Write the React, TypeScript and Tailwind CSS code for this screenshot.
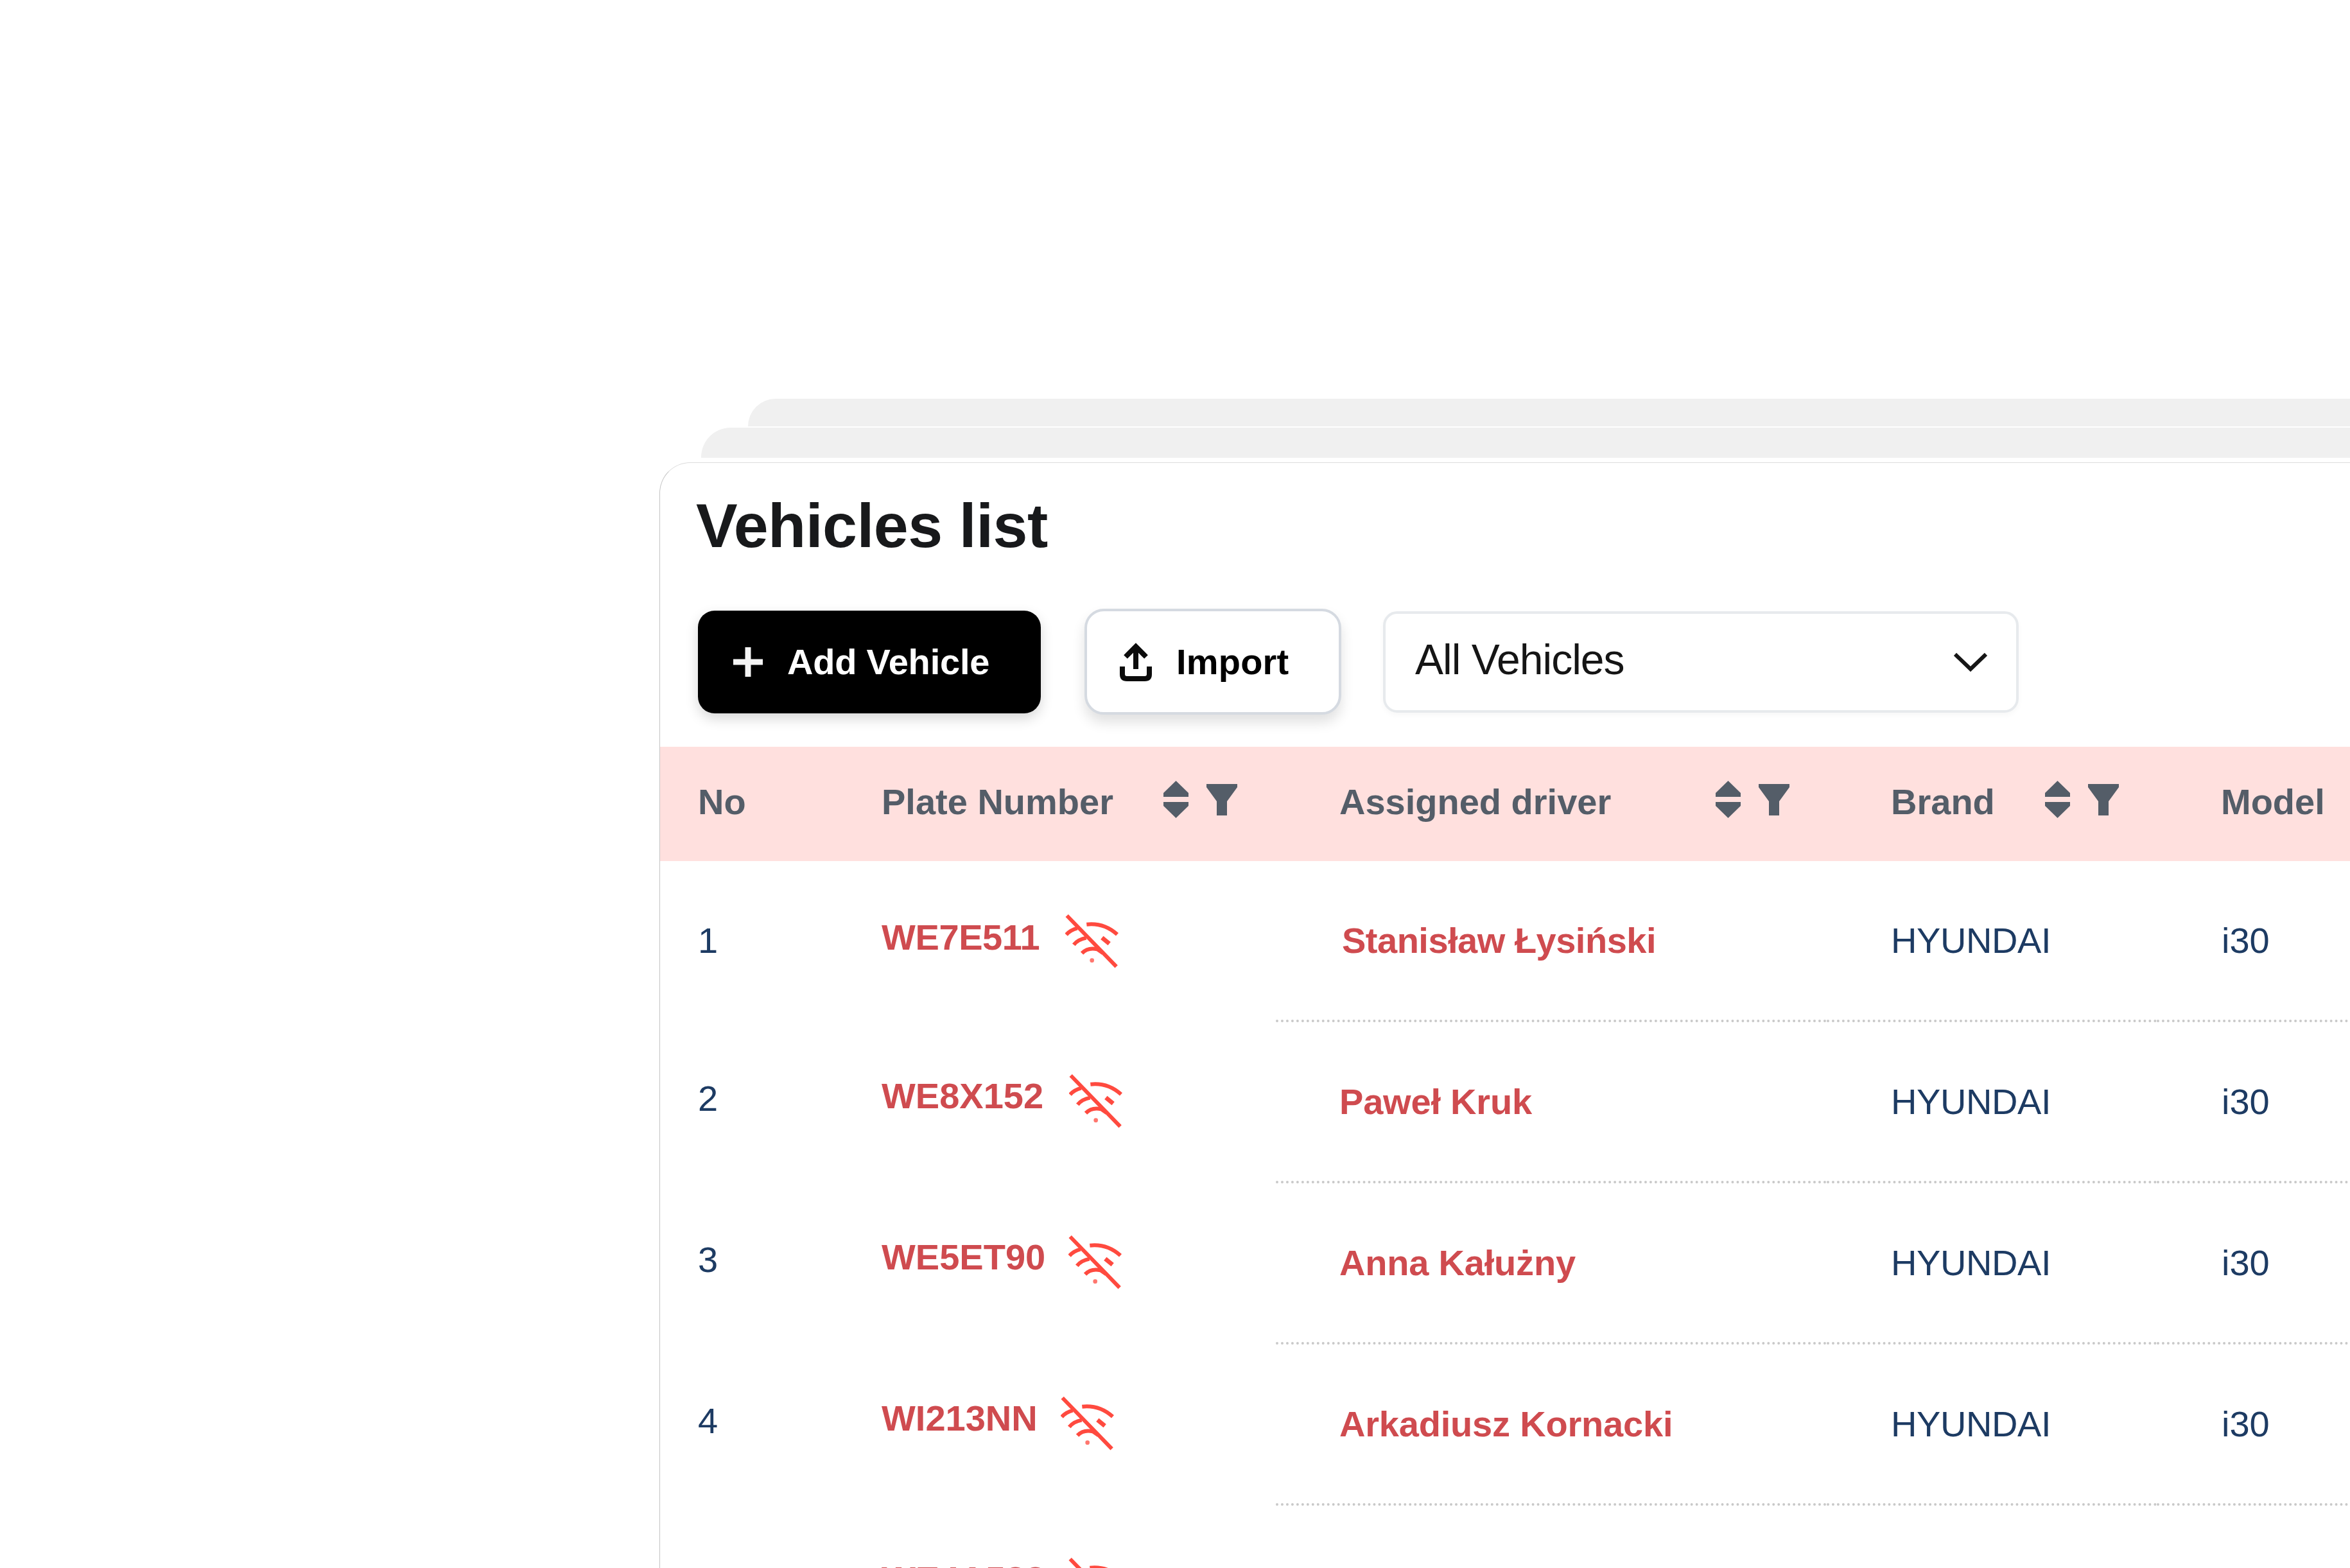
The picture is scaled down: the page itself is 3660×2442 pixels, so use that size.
import clsx from "clsx";

type Vehicle = {
  no: number;
  plate: string;
  driver: string;
  brand: string;
  model: string;
};

const vehicles: Vehicle[] = [
  { no: 1, plate: "WE7E511", driver: "Stanisław Łysiński", brand: "HYUNDAI", model: "i30" },
  { no: 2, plate: "WE8X152", driver: "Paweł Kruk", brand: "HYUNDAI", model: "i30" },
  { no: 3, plate: "WE5ET90", driver: "Anna Kałużny", brand: "HYUNDAI", model: "i30" },
  { no: 4, plate: "WI213NN", driver: "Arkadiusz Kornacki", brand: "HYUNDAI", model: "i30" },
  { no: 5, plate: "WE4A588", driver: "", brand: "", model: "" },
];

const WifiOff = () => (
  <svg viewBox="0 0 252 255" fill="none" stroke="#ff4a3f" strokeWidth="18" className="w-[84px] h-[85px] shrink-0">
    <path d="M8 9 L239 247" />
    <path d="M100 50 C155 44 200 58 243 97" />
    <path d="M5 98 Q25 76 56 68" />
    <path d="M40 145 Q60 120 98 113" />
    <path d="M78 185 Q105 156 150 166 L176 184" />
    <path d="M172 112 L206 140" strokeWidth="20" />
    <circle cx="125" cy="218" r="10" fill="#ff4a3f" stroke="none" opacity="0.75" />
  </svg>
);

const SortIcon = () => (
  <svg viewBox="0 0 39 58" fill="#545d68" className="w-[39px] h-[58px]">
    <path d="M19.5 0 L39 19 V25 H0 V19 Z" />
    <path d="M19.5 58 L39 39 V33 H0 V39 Z" />
  </svg>
);

const FilterIcon = () => (
  <svg viewBox="0 0 48 49" fill="#545d68" className="w-[48px] h-[49px]">
    <path d="M0 0 H48 V5 L32 27 V49 H16 V27 L0 5 Z" />
  </svg>
);

const PlusIcon = () => (
  <svg viewBox="0 0 46 46" stroke="#f4f4f4" strokeWidth="9" className="w-[46px] h-[46px]">
    <path d="M23 0 V46 M0 23 H46" />
  </svg>
);

const UploadIcon = () => (
  <svg viewBox="0 0 50 60" fill="none" stroke="#0c0c0c" strokeWidth="8" className="w-[50px] h-[60px]">
    <path d="M25 41 V6" />
    <path d="M9 22 L25 6 L41 22" />
    <path d="M4 37 V49 Q4 56 11 56 H39 Q46 56 46 49 V37" />
  </svg>
);

const ChevronIcon = () => (
  <svg viewBox="0 0 52 32" fill="none" stroke="#161616" strokeWidth="6" className="w-[52px] h-[32px]">
    <path d="M2 4 L26 27 L50 4" />
  </svg>
);

const ColumnTools = () => (
  <div className="flex items-center gap-[28px] pb-2">
    <SortIcon />
    <FilterIcon />
  </div>
);

const Toolbar = () => (
  <div className="flex items-center h-[165px] mt-[81px] pl-[59px]">
    <button className="flex items-center w-[534px] h-[160px] pl-[55px] rounded-[26px] bg-black text-white font-bold shadow-[0_8px_20px_rgba(0,0,0,0.16)]">
      <PlusIcon />
      <span className="ml-[38px] tracking-[-0.2px]">Add Vehicle</span>
    </button>
    <button className="flex items-center w-[400px] h-[165px] ml-[68px] pl-[51px] rounded-[30px] border-4 border-[#d5dae1] bg-white text-black font-bold shadow-[0_12px_20px_rgba(0,0,0,0.12)]">
      <UploadIcon />
      <span className="ml-[38px] tracking-[0.2px]">Import</span>
    </button>
    <div className="flex items-center justify-between w-[990px] h-[158px] ml-[65px] pl-[46px] pr-[45px] rounded-[22px] border-4 border-[#e7eaed] text-[#151515] shadow-[0_4px_8px_rgba(0,0,0,0.03)]">
      <span className="text-[66px] tracking-[-1px] pb-2">All Vehicles</span>
      <ChevronIcon />
    </div>
  </div>
);

const PinnedColumns = () => (
  <div className="w-[959px] shrink-0">
    <div className="flex items-center h-[178px] pb-[6px] bg-[#ffe0de] text-[#545d68] font-bold">
      <div className="w-[246px] pl-[59px]">No</div>
      <div className="flex-1 flex items-center justify-between pl-[99px] pr-[60px]">
        <span>Plate Number</span>
        <ColumnTools />
      </div>
    </div>
    {vehicles.map((v) => (
      <div key={v.no} className={clsx("flex items-center", v.no === 1 ? "h-[248px]" : "h-[251px]")}>
        <div className={clsx("w-[246px] pl-[59px] text-[#1d3b63]", v.no === 1 ? "pb-px" : "pb-[7px]")}>
          {v.no < 5 && v.no}
        </div>
        <div className="flex items-center pl-[99px] font-bold text-[#cf4b4f]">
          <span className={clsx(v.no === 1 ? "pb-2.5 tracking-[-0.4px]" : "pb-[15px]")}>{v.plate}</span>
          <div className={clsx(v.no < 3 ? "pl-[40px]" : "pl-[36px]")}>
            <WifiOff />
          </div>
        </div>
      </div>
    ))}
  </div>
);

const DetailColumns = () => (
  <div className="w-[1900px] shrink-0">
    <div className="flex items-center h-[178px] pb-[6px] bg-[#ffe0de] text-[#545d68] font-bold">
      <div className="flex items-center justify-between w-[858px] pl-[99px] pr-[58px]">
        <span>Assigned driver</span>
        <ColumnTools />
      </div>
      <div className="flex items-center justify-between w-[514px] pl-[100px] pr-[59px]">
        <span>Brand</span>
        <ColumnTools />
      </div>
      <div className="pl-[100px]">Model</div>
    </div>
    {vehicles.map((v) => (
      <div
        key={v.no}
        className="flex h-[251px] text-[#1d3b63] *:flex *:items-center *:border-b-4 *:border-dotted *:border-[#c9c9c9]"
      >
        <div className="w-[858px] pl-[99px] font-bold text-[#cf4b4f]">
          <span className={clsx("tracking-[-0.2px]", v.no === 1 && "pl-1 tracking-[-0.5px]!")}>{v.driver}</span>
        </div>
        <div className="w-[514px] pl-[100px] tracking-[-0.4px]">{v.brand}</div>
        <div className="w-[528px] pl-[101px]">{v.model}</div>
      </div>
    ))}
  </div>
);

const App = () => {
  return (
    <main className="w-[3660px] h-[2442px] overflow-hidden bg-white pt-[621px] font-['Liberation_Sans',Arial,sans-serif] text-[56px] leading-none whitespace-nowrap">
      {/* --- stacked sheets behind the card --- */}
      <div className="h-[43px] ml-[1165px] rounded-tl-[43px] bg-[#f0f0f0]" />
      <div className="h-[47px] ml-[1092px] mt-[2px] rounded-tl-[46px] bg-[#f0f0f0]" />

      {/* --- card --- */}
      <section className="h-[1800px] ml-[1027px] mt-[7px] pt-[49px] rounded-tl-[48px] border-l border-t border-l-[#c4c4c4] border-t-[#dcdcdc] overflow-hidden">
        <h1 className="pl-[56px] text-[97px] leading-none tracking-[-0.6px] font-bold text-[#18191b]">
          Vehicles list
        </h1>
        <Toolbar />
        <div className="flex mt-[50px]">
          <PinnedColumns />
          <DetailColumns />
        </div>
      </section>
    </main>
  );
};

export default App;
